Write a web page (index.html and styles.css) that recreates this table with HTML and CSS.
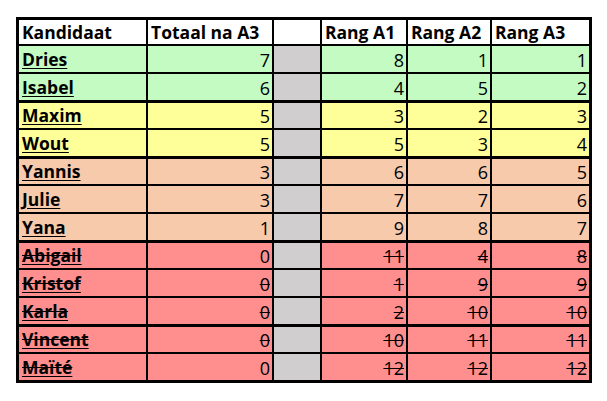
FILE: index.html
```html
<!DOCTYPE html>
<html>
<head>
<meta charset="utf-8">
<link rel="stylesheet" href="styles.css">
</head>
<body>
<div class="sheet">
  <div class="c h">Kandidaat</div><div class="c h">Totaal na A3</div><div class="c h"></div><div class="c h">Rang A1</div><div class="c h">Rang A2</div><div class="c h">Rang A3</div>

  <div class="c g name">Dries</div><div class="c g n">7</div><div class="c gray"></div><div class="c g n">8</div><div class="c g n">1</div><div class="c g n">1</div>
  <div class="c g name">Isabel</div><div class="c g n">6</div><div class="c gray"></div><div class="c g n">4</div><div class="c g n">5</div><div class="c g n">2</div>

  <div class="c y name t">Maxim</div><div class="c y n t">5</div><div class="c gray t"></div><div class="c y n t">3</div><div class="c y n t">2</div><div class="c y n t">3</div>
  <div class="c y name">Wout</div><div class="c y n">5</div><div class="c gray"></div><div class="c y n">5</div><div class="c y n">3</div><div class="c y n">4</div>

  <div class="c o name t">Yannis</div><div class="c o n t">3</div><div class="c gray t"></div><div class="c o n t">6</div><div class="c o n t">6</div><div class="c o n t">5</div>
  <div class="c o name">Julie</div><div class="c o n">3</div><div class="c gray"></div><div class="c o n">7</div><div class="c o n">7</div><div class="c o n">6</div>
  <div class="c o name">Yana</div><div class="c o n">1</div><div class="c gray"></div><div class="c o n">9</div><div class="c o n">8</div><div class="c o n">7</div>

  <div class="c r name s t">Abigail</div><div class="c r n t">0</div><div class="c gray t"></div><div class="c r n s t">11</div><div class="c r n s t">4</div><div class="c r n s t">8</div>
  <div class="c r name s">Kristof</div><div class="c r n s">0</div><div class="c gray"></div><div class="c r n s">1</div><div class="c r n s">9</div><div class="c r n s">9</div>
  <div class="c r name s">Karla</div><div class="c r n s">0</div><div class="c gray"></div><div class="c r n s">2</div><div class="c r n s">10</div><div class="c r n s">10</div>

  <div class="c r name s t">Vincent</div><div class="c r n s t">0</div><div class="c gray t"></div><div class="c r n s t">10</div><div class="c r n s t">11</div><div class="c r n s t">11</div>
  <div class="c r name s">Maïté</div><div class="c r n">0</div><div class="c gray"></div><div class="c r n s">12</div><div class="c r n s">12</div><div class="c r n s">12</div>
</div>
</body>
</html>
```
FILE: styles.css
```css
html, body {
  margin: 0;
  padding: 0;
  background: #ffffff;
}
body {
  padding: 17px 0 0 16px;
  font-family: "Open Sans", Lato, sans-serif;
  font-size: 17.5px;
  color: #000;
}
.sheet {
  display: inline-grid;
  background: #000;
  padding: 3px;
  column-gap: 2px;
  row-gap: 2px;
  grid-template-columns: 127px 124px 46px 84px 82px 97px;
  grid-template-rows: 24px repeat(12, 26px);
}
.c {
  display: flex;
  align-items: center;
  padding: 1px 2px 0 3px;
  white-space: nowrap;
  line-height: 1;
}
.c.t {
  margin-top: 1px;
}
.h {
  background: #ffffff;
  font-weight: 700;
}
.name {
  font-weight: 700;
  text-decoration: underline;
  text-underline-offset: 2px;
}
.name.s {
  text-decoration: underline line-through;
}
.n {
  justify-content: flex-end;
  font-size: 18px;
}
.n.s {
  text-decoration: line-through;
}
.g { background: #c3fbc3; }
.y { background: #ffff99; }
.o { background: #f7caac; }
.r { background: #ff8f8f; }
.gray { background: #d0cece; }
```
